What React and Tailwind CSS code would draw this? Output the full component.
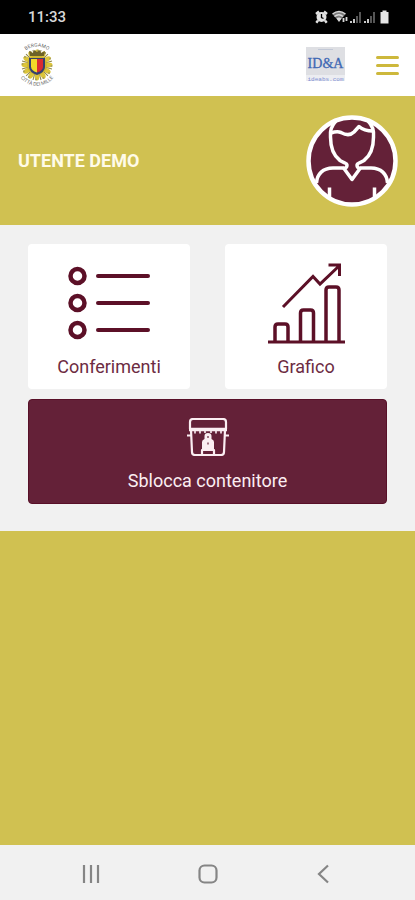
import React from 'react';

const FONT = "font-['Roboto','Liberation_Sans',sans-serif]";

function StatusBar() {
  return (
    <div className="flex h-[34px] items-center justify-between bg-black pl-7 pr-6 text-[#d8d8d8]">
      <span className="text-[15px] font-medium">11:33</span>
      <svg width="76" height="14" viewBox="0 0 76 14" aria-hidden="true">
        <circle cx="6.500" cy="7" r="5" fill="#e2e2e2" />
        <path d="M1 4 4 1.500M12 4 9 1.500M3 10.500 1.300 12.800M10 10.500 11.700 12.800" stroke="#e2e2e2" strokeWidth="2.400" />
        <path d="M6.500 4v3.500l2 1" fill="none" stroke="#000" strokeWidth="1.300" />
        <path d="M17.500 4.200Q24 -1 30.500 4.200L24 11.500Z" fill="#7a7a7a" />
        <path d="M17.500 4Q24 -1 30.500 4M19.500 6.500Q24 3 28 6.500" fill="none" stroke="#d8d8d8" strokeWidth="1.500" />
        <path d="M21.500 8.500Q24 6.500 26.500 8.500L24 12Z" fill="#d8d8d8" />
        <path d="M28.500 12V8M31.500 7v4" stroke="#d8d8d8" strokeWidth="1.800" />
        <path d="M36 13v-2M39 13V9M50 13v-2M53 13V9" stroke="#c8c8c8" strokeWidth="2" />
        <path d="M42 13V6M45 13V2M56 13V6M59 13V2" stroke="#555" strokeWidth="2" />
        <path d="M65.500 2h2V.500h4V2h2v11.500h-8Z" fill="#e6e6e6" />
      </svg>
    </div>
  );
}

function CityCrest() {
  const rays = Array.from({ length: 12 }, (_, i) => i * 30);
  return (
    <svg width="38" height="48" viewBox="0 0 38 48" role="img" aria-label="Bergamo Città dei Mille">
      <defs>
        <path id="crest-top" d="M4 13A19 19 0 0 1 34 13" />
        <path id="crest-bottom" d="M0 32A20.500 20.500 0 0 0 38 32" />
      </defs>
      <g transform="translate(19 24)">
        {rays.map((a) => (
          <g key={a} transform={`rotate(${a})`}>
            <ellipse cx="0" cy="-11" rx="2.400" ry="4.500" fill="#dcc53a" />
            <path d="M2.500 -9 4 -15" stroke="#8b8245" strokeWidth="1" />
            <circle cx="1" cy="-14.500" r="1" fill="#aaa25a" />
          </g>
        ))}
        <circle r="10" fill="#cdb62e" />
      </g>
      <path d="M12 15 11 10l4 2 1.500-3 2.500 2 2.500-2L23 12l4-2-1 5Z" fill="#6d6228" />
      <path d="M11 17h16v9q0 5-8 8-8-3-8-8Z" fill="#34406f" />
      <path d="M13 18h6v13.500q-6-2-6-6Z" fill="#f1d829" />
      <path d="M19 18h6v7.500q0 4-6 6Z" fill="#d92b32" />
      <g fill="#666" fontSize="5" className={FONT}>
        <text textAnchor="middle"><textPath href="#crest-top" startOffset="50%">BERGAMO</textPath></text>
        <text textAnchor="middle"><textPath href="#crest-bottom" startOffset="50%">CITTÀ DEI MILLE</textPath></text>
      </g>
    </svg>
  );
}

function CompanyLogo() {
  return (
    <svg width="40" height="36" viewBox="0 0 40 36" role="img" aria-label="ID&A ideabs.com">
      <rect width="39" height="28" fill="#dedfe3" />
      <rect y="28" width="39" height="6" fill="#ecedf1" />
      <path d="M12 2.500h15" stroke="#c2c8d6" />
      <text x="19.500" y="21" textAnchor="middle" fontSize="14" fill="#3f68b4" stroke="#3f68b4" strokeWidth=".3" className="font-['Liberation_Serif',serif]">ID&amp;A</text>
      <text x="19.500" y="34" textAnchor="middle" fontSize="6" fill="#7f90d4" className="font-['Liberation_Mono',monospace]">ideabs.com</text>
    </svg>
  );
}

function Header() {
  return (
    <header className="flex h-[62px] items-center justify-between bg-white pl-[18px] pr-4">
      <CityCrest />
      <div className="flex items-center gap-[30px]">
        <CompanyLogo />
        <button type="button" aria-label="Menu" className="flex w-[23px] flex-col gap-[5px]">
          <span className="h-[3px] w-full rounded-xs bg-[#cdb83c]" />
          <span className="h-[3px] w-full rounded-xs bg-[#cdb83c]" />
          <span className="h-[3px] w-full rounded-xs bg-[#cdb83c]" />
        </button>
      </div>
    </header>
  );
}

function Avatar() {
  return (
    <svg width="92" height="94" viewBox="0 0 92 94" aria-hidden="true">
      <circle cx="46" cy="47" r="43.500" fill="#642138" />
      <g fill="none" stroke="#fff" strokeWidth="3.500" strokeLinejoin="round">
        <path d="M30 7C25 12 24 18 24.500 23C24.500 34 28 42 34 46.500C38 49 41 49 41 51Q41 54 38 54.500L46 65.500L54 54.500Q51 54 51 51C51 49 54 49 58 46.500C64 42 67.500 34 67.500 23C68 18 67 12 62 7" />
        <path d="M25 19Q31 17 35 18.500Q43 23 48 18L53 12.500Q58 17 67 17" />
        <path d="M10.500 69C11 60 17 54 27 54H38M54 54H65C75 54 81 60 81.500 69" />
        <path d="M23.500 84V73.500M68.500 84V73.500" />
        <circle cx="46" cy="47" r="43.500" strokeWidth="4.500" />
      </g>
    </svg>
  );
}

function ListIcon() {
  return (
    <svg width="82" height="82" viewBox="0 0 82 82" fill="none" stroke="#5c1027" strokeWidth="4" strokeLinecap="round" aria-hidden="true">
      {[14, 41, 68].map((y) => (
        <g key={y}>
          <circle cx="9.500" cy={y} r="7" strokeWidth="4.500" />
          <path d={`M30 ${y}H80`} />
        </g>
      ))}
    </svg>
  );
}

function ChartIcon() {
  return (
    <svg width="78" height="82" viewBox="0 0 78 82" fill="none" stroke="#5c1027" strokeWidth="3.500" aria-hidden="true">
      <path d="M1 80H78" strokeWidth="3" />
      <path d="M8 80V65q0-3 3-3h7q3 0 3 3v15M33.500 80V51q0-3 3-3h7q3 0 3 3v29M59 80V28q0-3 3-3h7q3 0 3 3v52" />
      <path d="M16 45 46 14.500l7 7.500L72 4M61.500 3h11V14" strokeWidth="3" />
    </svg>
  );
}

function ContainerIcon() {
  return (
    <svg width="42" height="38" viewBox="0 0 42 38" fill="none" stroke="#fbeef2" strokeWidth="2.200" strokeLinejoin="round" aria-hidden="true">
      <path d="M3 11V4q0-3 3-3h30q3 0 3 3v7" />
      <path d="M2 11.500H40" strokeWidth="3.500" />
      <path d="M0 17.500h4M38 17.500h4M4 12l1 22q0 3 3 3h26q3 0 3-3l1-22" />
      <path d="M8 13v2.500M13 13v2.500M18 13v2M24 13v2M29 13v2.500M34 13v2.500" strokeWidth="1.600" />
      <path d="M15 37v-5h12v5" />
      <path d="M15 31V24q0-2 2.500-3V18q0-3 3.500-3t3.500 3v3q2.500 1 2.500 3v7Z" fill="#fbeef2" stroke="none" />
      <path d="M21 18v2M21 24.500v2" stroke="#642138" strokeWidth="1.200" />
    </svg>
  );
}

function Tile({ icon, label }) {
  return (
    <button type="button" className="flex flex-col items-center gap-3 rounded-sm bg-white pb-[11px] pt-[18px] text-[#6d2c42]">
      {icon}
      <span className="text-lg leading-[22px]">{label}</span>
    </button>
  );
}

function NavigationBar() {
  return (
    <nav className="flex h-[55px] items-center justify-between bg-[#f1f1f1] pt-[2px] pl-[81px] pr-[84px]">
      <button type="button" aria-label="App recenti">
        <svg width="20" height="20" viewBox="0 0 20 20" stroke="#858585" strokeWidth="2.200">
          <path d="M3 1v18M10 1v18M17 1v18" />
        </svg>
      </button>
      <button type="button" aria-label="Home">
        <svg width="20" height="20" viewBox="0 0 20 20" fill="none" stroke="#858585" strokeWidth="2.200">
          <rect x="1.500" y="1.500" width="17" height="17" rx="5" />
        </svg>
      </button>
      <button type="button" aria-label="Indietro">
        <svg width="16" height="20" viewBox="0 0 16 20" fill="none" stroke="#858585" strokeWidth="2.200">
          <path d="M13 1.500 4 10l9 8.500" />
        </svg>
      </button>
    </nav>
  );
}

export default function App() {
  return (
    <div className={`flex min-h-screen flex-col bg-[#d0c151] ${FONT}`}>
      <StatusBar />
      <Header />
      <section className="flex h-[129px] items-center justify-between pl-[18px] pr-[17px]">
        <h1 className="text-lg font-bold text-[#fffbe8]">UTENTE DEMO</h1>
        <Avatar />
      </section>
      <main className="flex flex-col gap-[10px] bg-[#f1f1f1] px-7 pb-[27px] pt-[19px]">
        <div className="grid grid-cols-2 gap-[35px]">
          <Tile icon={<ListIcon />} label="Conferimenti" />
          <Tile icon={<ChartIcon />} label="Grafico" />
        </div>
        <button type="button" className="flex flex-col items-center gap-[13px] rounded-sm border border-[#581028] bg-[#642138] pb-[10px] pt-[18px] text-[#fbeef2]">
          <ContainerIcon />
          <span className="text-lg leading-6">Sblocca contenitore</span>
        </button>
      </main>
      <div className="grow" />
      <NavigationBar />
    </div>
  );
}
